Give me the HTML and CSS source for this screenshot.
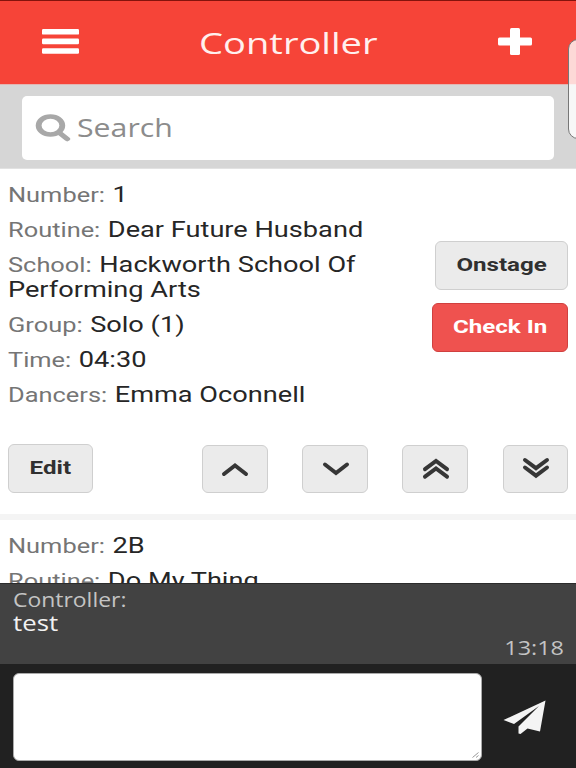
FILE: index.html
```html
<!DOCTYPE html>
<html lang="en">
<head>
    <meta charset="UTF-8">
    <title>Controller</title>
    <link rel="stylesheet" href="styles.css">
</head>
<body>

    <header>
        <svg class="menu-icon" width="37" height="25" viewBox="0 0 37 25">
            <rect width="37" height="5.6" rx="1.2"/>
            <rect y="9.6" width="37" height="5.6" rx="1.2"/>
            <rect y="19.2" width="37" height="5.6" rx="1.2"/>
        </svg>
        <h1>Controller</h1>
        <svg class="add-icon" width="34" height="27" viewBox="0 0 34 27">
            <rect x="12" width="10" height="27" rx="1.5"/>
            <rect y="9.5" width="34" height="8" rx="1.5"/>
        </svg>
    </header>

    <div class="search-bar">
        <div class="search-box">
            <svg width="36" height="28" viewBox="0 0 27.7 28" preserveAspectRatio="none">
                <circle cx="11.9" cy="11.5" r="9.1"/>
                <path d="M18.5 18.5 L24.800 25"/>
            </svg>
            <span class="search-text">Search</span>
        </div>
    </div>

    <main>
        <section class="card">
            <div class="card-top">
                <div class="details">
                    <p>Number: <b>1</b></p>
                    <p>Routine: <b>Dear Future Husband</b></p>
                    <p>School: <b>Hackworth School Of Performing Arts</b></p>
                    <p>Group: <b>Solo (1)</b></p>
                    <p>Time: <b>04:30</b></p>
                    <p>Dancers: <b>Emma Oconnell</b></p>
                </div>
                <div class="status">
                    <button class="onstage"><span>Onstage</span></button>
                    <button class="check-in"><span>Check In</span></button>
                </div>
            </div>
            <div class="actions">
                <button class="edit"><span>Edit</span></button>
                <button class="move"><svg width="28" height="26" viewBox="0 0 28 26"><path d="M3 18 L14 9.500 L25 18"/></svg></button>
                <button class="move"><svg width="28" height="26" viewBox="0 0 28 26"><path d="M3 8.500 L14 17 L25 8.500"/></svg></button>
                <button class="move"><svg width="28" height="26" viewBox="0 0 28 26"><path d="M3 13.200 L14 5 L25 13.200 M3 20.700 L14 12.500 L25 20.700"/></svg></button>
                <button class="move"><svg width="28" height="26" viewBox="0 0 28 26"><path d="M3 4 L14 12.200 L25 4 M3 11.500 L14 19.700 L25 11.500"/></svg></button>
            </div>
        </section>
        <section class="card">
            <div class="details">
                <p>Number: <b>2B</b></p>
                <p>Routine: <b>Do My Thing</b></p>
            </div>
        </section>
    </main>

    <div class="message">
        <div class="sender">Controller:</div>
        <div class="text">test</div>
        <div class="time">13:18</div>
    </div>

    <footer>
        <div class="message-input">
            <svg width="7" height="6" viewBox="0 0 7 6"><path d="M0.500 5.500 L6.500 0.500 M4 5.500 L6.500 3.500"/></svg>
        </div>
        <svg class="send-icon" width="44" height="35" viewBox="0 0 44 35">
            <path d="M42.500 0.500 L37 31.500 L24.500 28.500 L17.500 34 L15.500 33.500 L15.500 26.500 L36 6 L11 24 L0.500 20 Z"/>
        </svg>
    </footer>

    <div class="side-panel">
        <div class="side-handle"></div>
    </div>

</body>
</html>
```
FILE: styles.css
```css
* {
    box-sizing: border-box;
}

body {
    font-family: Roboto, sans-serif;
    background: #fff;
    margin: 0;
    height: 768px;
    display: flex;
    flex-direction: column;
    overflow: hidden;
    position: relative;
}

header {
    height: 84px;
    flex: none;
    background: #f64438;
    border-top: 1px solid #84130c;
    padding: 0 44px 0 42px;
    display: flex;
    justify-content: space-between;
    align-items: center;
}

header svg {
    fill: #fff;
    margin-bottom: 3px;
}

header h1 {
    font-family: "Open Sans", sans-serif;
    font-size: 30px;
    font-weight: 400;
    line-height: 40px;
    margin: 1px 1px 0 0;
    color: #fff0ee;
    transform: scaleX(1.27);
}

.search-bar {
    height: 85px;
    flex: none;
    background: #d6d6d6;
    border-top: 1px solid #e3b5b2;
    border-bottom: 1px solid #e2e2e2;
    padding: 11px 22px 9px;
}

.search-box {
    height: 64px;
    background: #fff;
    border-radius: 5px;
    padding-left: 13px;
    display: flex;
    align-items: center;
}

.search-box svg {
    fill: none;
    stroke: #a8a8a8;
    stroke-width: 4.5;
    stroke-linecap: round;
}

.search-text {
    font-family: "Open Sans", sans-serif;
    font-size: 25px;
    color: #8c8c8c;
    margin: 0 0 3px 6px;
    transform: scaleX(1.21);
    transform-origin: left;
}

main {
    flex: 1;
    min-height: 0;
    overflow: hidden;
}

.card {
    height: 351px;
    padding: 13.500px 8px 0;
    border-bottom: 6px solid #f4f4f4;
}

.card-top {
    display: flex;
    justify-content: space-between;
}

/* text is drawn wider than its natural width */
.details {
    width: 300px;
    transform: scaleX(1.27);
    transform-origin: left;
}

.details p {
    margin: 0 0 9.7px;
    font-size: 20px;
    line-height: 25.4px;
    color: #757575;
}

.details b {
    font-size: 21.4px;
    font-weight: 400;
    line-height: 20px;
    margin-left: 1px;
    color: #262626;
}

.status {
    display: flex;
    flex-direction: column;
    align-items: flex-end;
    gap: 13px;
    padding-top: 58.500px;
}

button {
    font-family: Roboto, sans-serif;
    font-size: 19px;
    font-weight: 700;
    color: #303030;
    background: #ebebeb;
    border: 1px solid #cfcfcf;
    border-radius: 6px;
    padding: 0;
    height: 49px;
    display: flex;
    justify-content: center;
    align-items: center;
}

button span {
    margin-bottom: 2px;
    transform: scaleX(1.27);
}

.onstage {
    width: 133px;
}

.check-in {
    width: 136px;
    color: #fff;
    background: #ef524f;
    border-color: #d0403f;
}

.actions {
    display: flex;
    align-items: flex-end;
    gap: 34.600px;
    margin-top: 25.500px;
}

.edit {
    width: 85px;
    margin-right: auto;
}

.move {
    width: 65.500px;
    height: 47.500px;
}

.move svg {
    fill: none;
    stroke: #363636;
    stroke-width: 4;
    stroke-linecap: round;
    margin-left: 1px;
}

.message {
    height: 81px;
    flex: none;
    background: #424242;
    border-top: 1px solid #2c2c2c;
    padding: 4px 12px 0 13px;
    display: flex;
    flex-direction: column;
    align-items: flex-start;
    font-family: "Open Sans", sans-serif;
    color: #c4c4c4;
    font-size: 20px;
    line-height: 24px;
}

.message div {
    transform: scaleX(1.17);
    transform-origin: left;
}

.message .sender {
    font-size: 19.600px;
}

.message .text {
    font-size: 22px;
    line-height: 21px;
    margin-bottom: 3px;
    color: #f2f2f2;
}

.message .time {
    align-self: flex-end;
    transform-origin: right;
}

footer {
    height: 104px;
    flex: none;
    background: #212121;
    padding: 9px 29px 7px 13px;
    display: flex;
    justify-content: space-between;
    align-items: center;
}

.message-input {
    width: 469px;
    height: 88px;
    background: #fff;
    border: 1px solid #aaa;
    border-radius: 6px;
    display: flex;
    justify-content: flex-end;
    align-items: flex-end;
    padding: 2px;
}

.message-input svg {
    fill: none;
    stroke: #999;
}

.send-icon {
    fill: #f4f4f4;
}

/* edge panel tab over the page */
.side-panel {
    position: absolute;
    top: 39px;
    right: 0;
    width: 8px;
    height: 100px;
    overflow: hidden;
}

.side-handle {
    width: 20px;
    height: 100px;
    background: rgba(255, 255, 255, 0.8);
    border: 1px solid #777;
    border-radius: 10px;
}
```
